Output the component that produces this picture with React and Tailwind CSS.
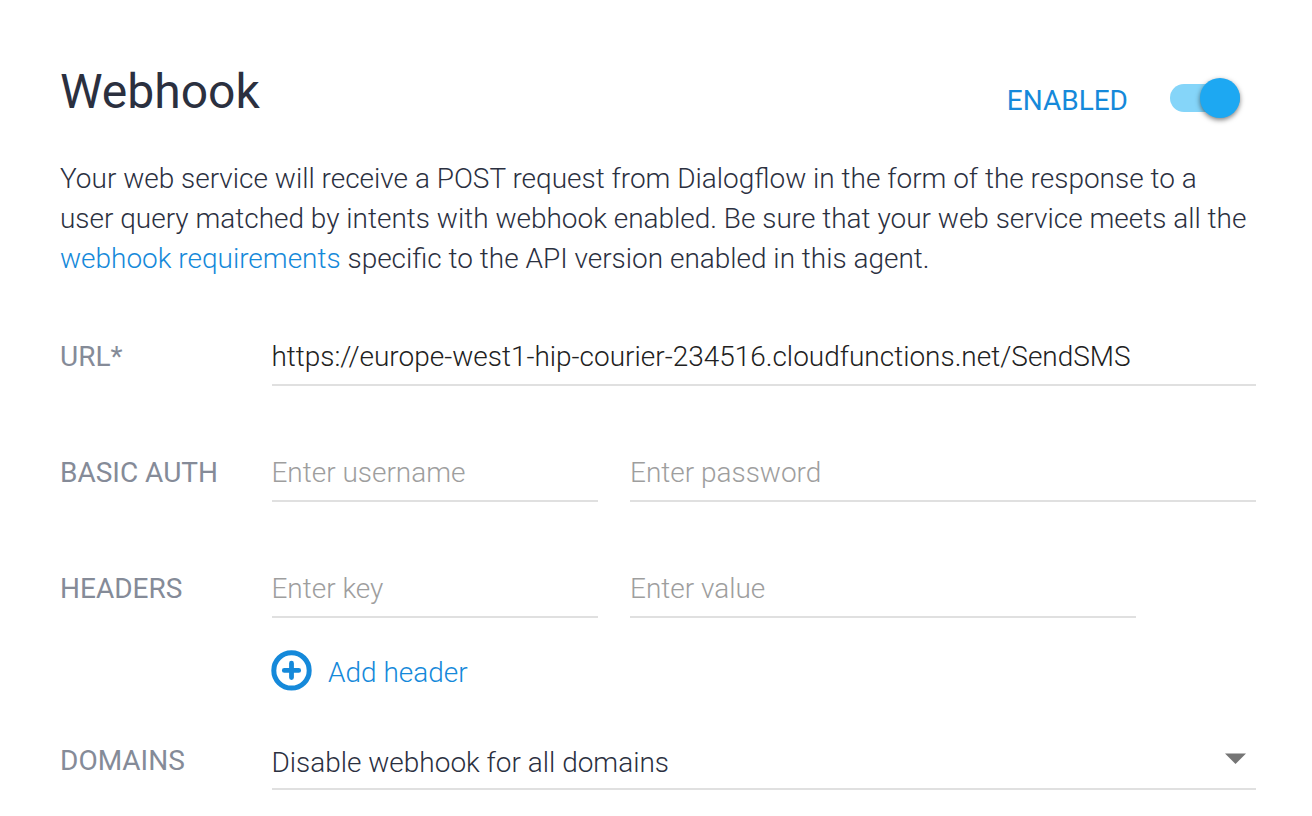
function Field({ className, children }) {
  return (
    <div className={`h-[66px] border-b-2 border-[#e0e0e0] pt-[21px] text-[27.97px] leading-[32px] font-light whitespace-nowrap ${className}`}>
      {children}
    </div>
  );
}

function Label({ children }) {
  return <div className="w-[212px] shrink-0 pt-[21px] text-[28px] leading-[32px] text-[#858b98]">{children}</div>;
}

export default function App() {
  return (
    <main className="h-[816px] w-[1312px] overflow-hidden bg-white pr-14 pl-[60px] font-['Roboto',sans-serif] text-[#2b303f]">
      <header className="flex h-[159px] justify-between pt-[63px] pr-4">
        <h1 className="pt-px text-[48px] leading-[56px]">Webhook</h1>
        <div className="flex h-10 items-start pt-[15px]">
          <span className="pt-[7px] text-[28px] leading-[32px] text-[#1589da]">ENABLED</span>
          <span className="ml-[42px] flex h-10 w-[70px] items-center">
            <span className="flex h-7 w-[70px] items-center justify-end rounded-full bg-[#85d5f9]">
              <span className="size-10 shrink-0 rounded-full bg-[#1da8f2] shadow-[0_2px_5px_rgba(0,0,0,0.5)]" />
            </span>
          </span>
        </div>
      </header>
      <div className="h-[161px] text-[27.97px] leading-[40px] font-light whitespace-nowrap">
        <p>Your web service will receive a POST request from Dialogflow in the form of the response to a</p>
        <p>user query matched by intents with webhook enabled. Be sure that your web service meets all the</p>
        <p><a className="text-[#1589da]">webhook requirements</a> specific to the API version enabled in this agent.</p>
      </div>
      <section className="flex h-[116px]">
        <Label>URL*</Label>
        <Field className="w-[984px] indent-[-0.6px] text-[#212121]">https://europe-west1-hip-courier-234516.cloudfunctions.net/SendSMS</Field>
      </section>
      <section className="flex h-[116px]">
        <Label>BASIC AUTH</Label>
        <Field className="w-[326px] indent-[-0.6px] text-[#9e9e9e]">Enter username</Field>
        <Field className="ml-8 w-[626px] text-[#9e9e9e]">Enter password</Field>
      </section>
      <section className="flex h-[66px]">
        <Label>HEADERS</Label>
        <Field className="w-[326px] indent-[-0.6px] text-[#9e9e9e]">Enter key</Field>
        <Field className="ml-8 w-[506px] text-[#9e9e9e]">Enter value</Field>
      </section>
      <div className="flex h-[106px] items-start pt-8 pl-[211px] text-[#1589da]">
        <svg className="size-[42px]" viewBox="0 0 42 42" fill="none" stroke="currentColor" strokeLinecap="round">
          <circle cx="20.5" cy="20.4" r="17.7" strokeWidth="5" />
          <path d="M20.5 13.2v14.4M13.3 20.4h14.4" strokeWidth="4.8" />
        </svg>
        <span className="ml-[15px] pt-[7px] text-[27.97px] leading-[32px] font-light">Add header</span>
      </div>
      <section className="flex h-[66px]">
        <Label>DOMAINS</Label>
        <Field className="flex w-[984px] justify-between pr-[10px]">
          <span className="pt-[2px] indent-[-0.6px]">Disable webhook for all domains</span>
          <svg className="mt-[8px] h-[11px] w-[21px]" viewBox="0 0 21 11" fill="#757575"><path d="M0 .4h21L10.5 11z" /></svg>
        </Field>
      </section>
    </main>
  );
}
